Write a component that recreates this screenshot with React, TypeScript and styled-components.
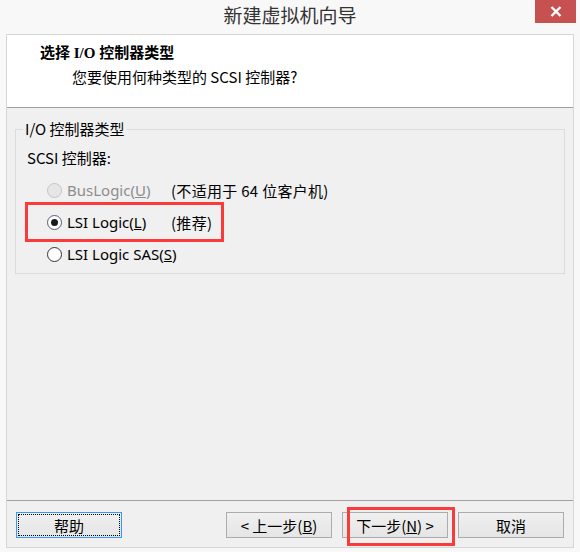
import React, { FC } from 'react'
import styled, { createGlobalStyle, css } from 'styled-components'

const GlobalStyle = createGlobalStyle`
    html, body {
        margin: 0;
        padding: 0;
        background: #f8f8f8;
    }
    body {
        font-family: "Noto Sans", "Noto Sans CJK SC", sans-serif;
        font-size: 15px;
        color: #000;
    }
`

const Window = styled.div`
    width: 580px;
    height: 552px;
    display: flex;
    flex-direction: column;
    background: #f8f8f8;
    overflow: hidden;
`

const TitleBar = styled.div`
    height: 34px;
    display: grid;
    grid-template-columns: 1fr auto 1fr;
    align-items: start;
`

const Title = styled.div`
    grid-column: 2;
    padding-top: 2px;
    font-family: "Noto Sans CJK SC", sans-serif;
    font-size: 19px;
    color: #333;
    line-height: 26px;
`

const CloseButton = styled.div`
    grid-column: 3;
    justify-self: end;
    width: 41px;
    height: 23px;
    margin-right: 4px;
    background: #c75050;
    display: flex;
    align-items: center;
    justify-content: center;
`

const Frame = styled.div`
    margin: 0 6px;
    height: 514px;
    border: 1px solid #d6d6d6;
    display: flex;
    flex-direction: column;
    box-sizing: border-box;
`

const Header = styled.div`
    height: 73px;
    flex-shrink: 0;
    background: #fff;
    border-bottom: 1px solid #a0a0a0;
    padding: 7px 0 0 33px;
    box-sizing: border-box;
`

const HeaderTitle = styled.div`
    font-family: "Liberation Serif", "Noto Sans CJK SC", serif;
    font-weight: bold;
    font-size: 15px;
    line-height: 22px;
`

const HeaderSub = styled.div`
    margin: 2px 0 0 32px;
    font-family: "Noto Sans CJK SC", sans-serif;
    font-size: 15px;
    line-height: 22px;
`

const Body = styled.div`
    flex: 1;
    background: #f0f0f0;
    padding: 12px 8px 0 8px;
    display: flex;
    flex-direction: column;
`

const Group = styled.fieldset`
    margin: 0;
    padding: 0 0 8px 11px;
    height: 154px;
    box-sizing: border-box;
    border: 1px solid #dcdcdc;
`

const Legend = styled.legend`
    margin-left: -4px;
    padding: 0 2px;
    font-family: "Noto Sans CJK SC", sans-serif;
    font-size: 15px;
    line-height: 18px;
`

const Label = styled.div`
    font-family: "Noto Sans CJK SC", sans-serif;
    margin-top: 10px;
    line-height: 20px;
`

const Options = styled.div`
    margin-top: 6px;
    display: flex;
    flex-direction: column;
`

const Row = styled.div<{ $mark?: boolean }>`
    position: relative;
    height: 32px;
    display: grid;
    grid-template-columns: 124px auto;
    align-items: center;
    padding-left: 20px;
    ${p => p.$mark && css`
        &::after {
            content: '';
            position: absolute;
            left: -2px;
            top: -4px;
            width: 199px;
            height: 40px;
            border: 3px solid #fd3a3a;
            box-sizing: border-box;
        }
    `}
`

const Radio = styled.span<{ $checked?: boolean; $disabled?: boolean }>`
    display: inline-block;
    width: 13px;
    height: 13px;
    border-radius: 50%;
    border: 1px solid ${p => (p.$disabled ? '#c4c4c4' : '#333')};
    background: ${p => (p.$disabled ? '#e6e6e6' : '#fff')};
    margin-right: 5px;
    position: relative;
    flex-shrink: 0;
    ${p => p.$checked && css`
        border-color: #4d5f80;
        &::after {
            content: '';
            position: absolute;
            left: 3px;
            top: 3px;
            width: 7px;
            height: 7px;
            border-radius: 50%;
            background: #1a1a1a;
        }
    `}
`

const OptionText = styled.span<{ $disabled?: boolean }>`
    display: flex;
    align-items: center;
    white-space: nowrap;
    color: ${p => (p.$disabled ? '#8d8d8d' : '#000')};
    font-family: "Noto Sans", "Noto Sans CJK SC", sans-serif;
`

const Note = styled.span`
    font-family: "Noto Sans CJK SC", sans-serif;
    white-space: nowrap;
    letter-spacing: 0.3px;
`

const Spacer = styled.div`
    flex: 1;
`

const Footer = styled.div`
    height: 47px;
    flex-shrink: 0;
    border-top: 1px solid #a0a0a0;
    background: #f0f0f0;
    display: flex;
    align-items: flex-start;
    padding: 11px 9px 0 9px;
    box-sizing: border-box;
    gap: 10px;
`

const Button = styled.button<{ $focus?: boolean; $mark?: boolean; $push?: boolean }>`
    position: relative;
    width: 106px;
    height: 26px;
    padding: 0;
    border: 1px solid #acacac;
    background: linear-gradient(#f0f0f0, #e5e5e5);
    font-family: "Noto Sans CJK SC", sans-serif;
    font-size: 15px;
    color: #000;
    white-space: pre;
    ${p => p.$push && css`margin-left: auto;`}
    ${p => p.$focus && css`
        border-color: #3399ff;
        outline: 1px dotted #000;
        outline-offset: -3px;
    `}
    ${p => p.$mark && css`
        &::after {
            content: '';
            position: absolute;
            left: 4px;
            top: -6px;
            width: 108px;
            height: 39px;
            border: 3px solid #fd3a3a;
            box-sizing: border-box;
        }
    `}
`

const U = styled.span`
    text-decoration: underline;
`

const App: FC = () => {
    return (
        <Window>
            <GlobalStyle />
            <TitleBar>
                <Title>新建虚拟机向导</Title>
                <CloseButton>
                    <svg width="12" height="11" viewBox="0 0 12 11">
                        <path d="M1.5 1 L10.5 10 M10.5 1 L1.5 10" stroke="#fff" strokeWidth="2.4" />
                    </svg>
                </CloseButton>
            </TitleBar>
            <Frame>
                <Header>
                    <HeaderTitle>选择 I/O 控制器类型</HeaderTitle>
                    <HeaderSub>您要使用何种类型的 SCSI 控制器?</HeaderSub>
                </Header>
                <Body>
                    <Group>
                        <Legend>I/O 控制器类型</Legend>
                        <Label>SCSI 控制器:</Label>
                        <Options>
                            <Row>
                                <OptionText $disabled>
                                    <Radio $disabled />BusLogic(<U>U</U>)
                                </OptionText>
                                <Note>(不适用于 64 位客户机)</Note>
                            </Row>
                            <Row $mark>
                                <OptionText>
                                    <Radio $checked />LSI Logic(<U>L</U>)
                                </OptionText>
                                <Note>(推荐)</Note>
                            </Row>
                            <Row>
                                <OptionText>
                                    <Radio />LSI Logic SAS(<U>S</U>)
                                </OptionText>
                            </Row>
                        </Options>
                    </Group>
                    <Spacer />
                </Body>
                <Footer>
                    <Button $focus>帮助</Button>
                    <Button $push>&lt; 上一步(<U>B</U>)</Button>
                    <Button $mark>下一步(<U>N</U>) &gt;</Button>
                    <Button>取消</Button>
                </Footer>
            </Frame>
        </Window>
    )
}

export default App
